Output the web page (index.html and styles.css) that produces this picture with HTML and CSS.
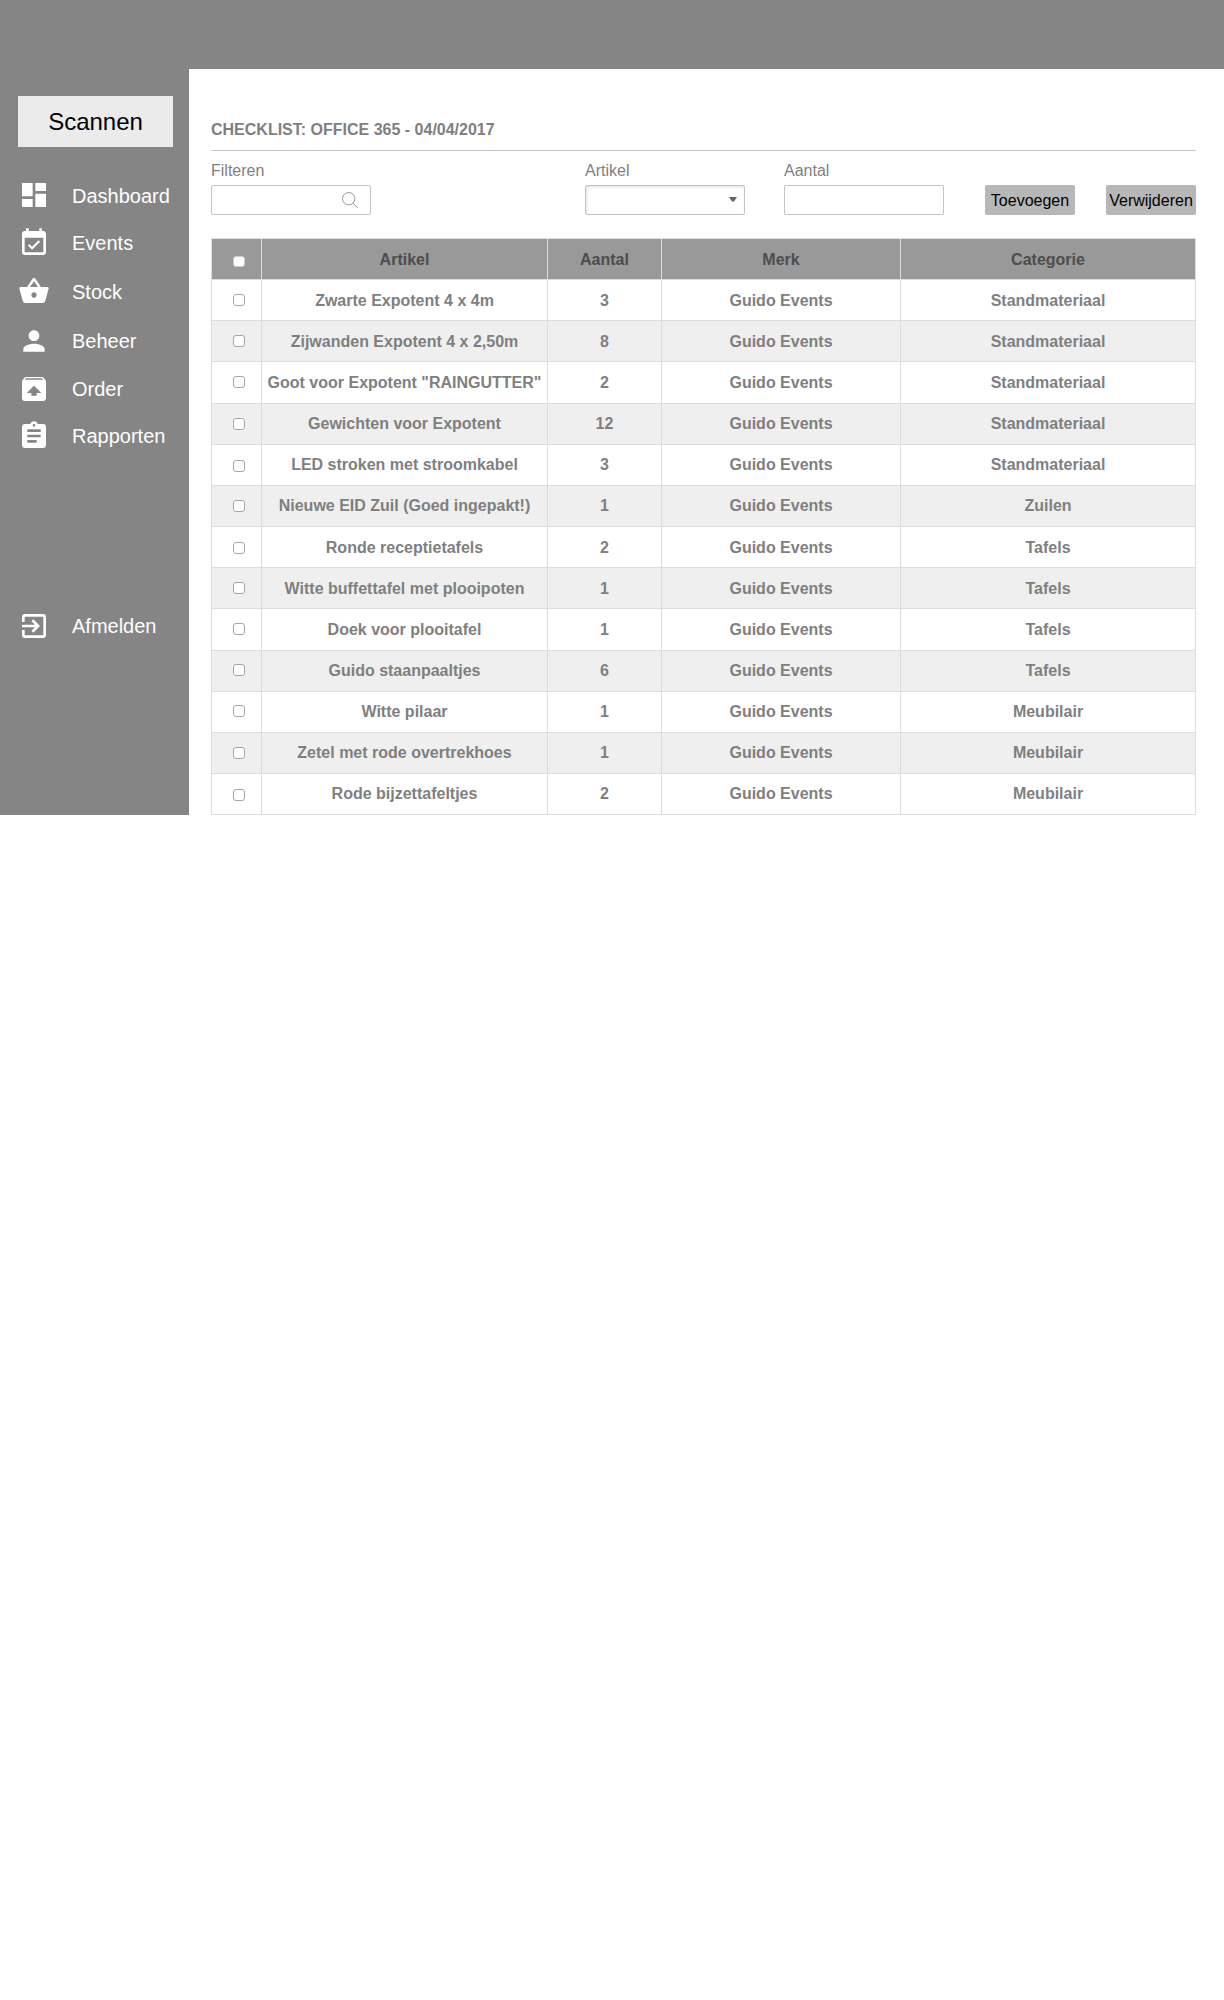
FILE: index.html
```html
<!DOCTYPE html>
<html lang="nl">
<head>
<meta charset="utf-8">
<title>Checklist</title>
<link rel="stylesheet" href="styles.css">
</head>
<body>
<header class="topbar"></header>
<div class="layout">
  <aside class="sidebar">
    <button class="scan">Scannen</button>
    <nav class="menu">
      <a class="item low"><svg viewBox="0 0 24 24"><path d="M3 13h8V3H3v10zm0 8h8v-6H3v6zm10 0h8V11h-8v10zm0-18v6h8V3h-8z"/></svg><span>Dashboard</span></a>
      <a class="item"><svg viewBox="0 0 24 24"><path d="M16.53 11.06L15.47 10l-4.88 4.88-2.12-2.12-1.06 1.06L10.59 17l5.94-5.94zM19 3h-1V1h-2v2H8V1H6v2H5c-1.11 0-1.99.9-1.99 2L3 19c0 1.1.89 2 2 2h14c1.1 0 2-.9 2-2V5c0-1.1-.9-2-2-2zm0 16H5V8h14v11z"/></svg><span>Events</span></a>
      <a class="item low"><svg viewBox="0 0 24 24"><path d="M17.21 9l-4.38-6.56c-.19-.28-.51-.42-.83-.42-.32 0-.64.14-.83.43L6.79 9H2c-.55 0-1 .45-1 1 0 .09.01.18.04.27l2.54 9.27c.23.84 1 1.46 1.92 1.46h13c.92 0 1.69-.62 1.93-1.46l2.54-9.27L23 10c0-.55-.45-1-1-1h-4.79zM9 9l3-4.4L15 9H9zm3 8c-1.1 0-2-.9-2-2s.9-2 2-2 2 .9 2 2-.9 2-2 2z"/></svg><span>Stock</span></a>
      <a class="item beheer"><svg viewBox="0 0 24 24"><path d="M12 12c2.21 0 4-1.79 4-4s-1.79-4-4-4-4 1.79-4 4 1.79 4 4 4zm0 2c-2.67 0-8 1.34-8 4v2h16v-2c0-2.66-5.33-4-8-4z"/></svg><span>Beheer</span></a>
      <a class="item"><svg viewBox="0 0 24 24"><path d="M20.55 5.22l-1.39-1.68C18.88 3.21 18.47 3 18 3H6c-.47 0-.88.21-1.15.55L3.46 5.22C3.17 5.57 3 6.01 3 6.5V19c0 1.1.89 2 2 2h14c1.1 0 2-.9 2-2V6.5c0-.49-.17-.93-.45-1.28zM12 9.5l5.5 5.5H14v2h-4v-2H6.5L12 9.5zM5.12 5l.82-1h12l.93 1H5.12z"/></svg><span>Order</span></a>
      <a class="item rapporten"><svg viewBox="0 0 24 24"><path d="M19 3h-4.18C14.4 1.84 13.3 1 12 1c-1.3 0-2.4.84-2.82 2H5c-1.1 0-2 .9-2 2v14c0 1.1.9 2 2 2h14c1.1 0 2-.9 2-2V5c0-1.1-.9-2-2-2zm-7 0c.55 0 1 .45 1 1s-.45 1-1 1-1-.45-1-1 .45-1 1-1zm2 14H7v-2h7v2zm3-4H7v-2h10v2zm0-4H7V7h10v2z"/></svg><span>Rapporten</span></a>
      <a class="item logout"><svg viewBox="0 0 24 24"><path d="M10.09 15.59L11.5 17l5-5-5-5-1.41 1.41L12.67 11H3v2h9.67l-2.58 2.59zM19 3H5c-1.11 0-2 .9-2 2v4h2V5h14v14H5v-4H3v4c0 1.1.89 2 2 2h14c1.1 0 2-.9 2-2V5c0-1.1-.9-2-2-2z"/></svg><span>Afmelden</span></a>
    </nav>
  </aside>
  <main class="content">
    <h1 class="title">CHECKLIST: OFFICE 365 - 04/04/2017</h1>
    <div class="tools">
      <div class="field filter"><span class="label">Filteren</span><div class="box"><svg class="search" viewBox="0 0 18 18"><circle cx="7.7" cy="7.7" r="6.2"/><path d="M12.4 12.4L16.6 16.8"/></svg></div></div>
      <div class="field artikel"><span class="label">Artikel</span><div class="box select"><svg class="arrow" viewBox="0 0 8 5"><path d="M0 0h8L5 4.6H3z"/></svg></div></div>
      <div class="field aantal"><span class="label">Aantal</span><div class="box"></div></div>
      <button class="btn add">Toevoegen</button>
      <button class="btn">Verwijderen</button>
    </div>
    <table class="list">
      <colgroup><col class="c-check"><col class="c-artikel"><col class="c-aantal"><col class="c-merk"><col></colgroup>
      <thead><tr><th><i class="check"></i></th><th>Artikel</th><th>Aantal</th><th>Merk</th><th>Categorie</th></tr></thead>
      <tbody>
        <tr><td><i class="check"></i></td><td>Zwarte Expotent 4 x 4m</td><td>3</td><td>Guido Events</td><td>Standmateriaal</td></tr>
        <tr><td><i class="check"></i></td><td>Zijwanden Expotent 4 x 2,50m</td><td>8</td><td>Guido Events</td><td>Standmateriaal</td></tr>
        <tr class="tall"><td><i class="check"></i></td><td>Goot voor Expotent "RAINGUTTER"</td><td>2</td><td>Guido Events</td><td>Standmateriaal</td></tr>
        <tr class="up"><td><i class="check"></i></td><td>Gewichten voor Expotent</td><td>12</td><td>Guido Events</td><td>Standmateriaal</td></tr>
        <tr class="up"><td><i class="check drop"></i></td><td>LED stroken met stroomkabel</td><td>3</td><td>Guido Events</td><td>Standmateriaal</td></tr>
        <tr class="up"><td><i class="check"></i></td><td>Nieuwe EID Zuil (Goed ingepakt!)</td><td>1</td><td>Guido Events</td><td>Zuilen</td></tr>
        <tr><td><i class="check drop"></i></td><td>Ronde receptietafels</td><td>2</td><td>Guido Events</td><td>Tafels</td></tr>
        <tr><td><i class="check"></i></td><td>Witte buffettafel met plooipoten</td><td>1</td><td>Guido Events</td><td>Tafels</td></tr>
        <tr class="tall"><td><i class="check"></i></td><td>Doek voor plooitafel</td><td>1</td><td>Guido Events</td><td>Tafels</td></tr>
        <tr class="up"><td><i class="check lift"></i></td><td>Guido staanpaaltjes</td><td>6</td><td>Guido Events</td><td>Tafels</td></tr>
        <tr class="up"><td><i class="check lift"></i></td><td>Witte pilaar</td><td>1</td><td>Guido Events</td><td>Meubilair</td></tr>
        <tr class="up"><td><i class="check"></i></td><td>Zetel met rode overtrekhoes</td><td>1</td><td>Guido Events</td><td>Meubilair</td></tr>
        <tr class="up"><td><i class="check drop"></i></td><td>Rode bijzettafeltjes</td><td>2</td><td>Guido Events</td><td>Meubilair</td></tr>
      </tbody>
    </table>
  </main>
</div>
</body>
</html>
```
FILE: styles.css
```css
* { box-sizing: border-box; }
body {
  margin: 0;
  background: #fff;
  color: #7f7f7f;
  font: 16px/18px "Liberation Sans", Arial, sans-serif;
}
button { border: 0; padding: 0; font: inherit; color: #000; }
.topbar { height: 69px; background: #858585; }
.layout { display: flex; height: 746px; }

.sidebar { width: 189px; background: #858585; padding: 27px 16px 0 18px; }
.scan { display: block; width: 155px; height: 51px; background: #ebebeb; font-size: 24px; line-height: 51px; }
.menu { display: flex; flex-direction: column; gap: 16px; margin-top: 32px; }
.item { display: flex; gap: 22px; height: 32px; color: #fff; font-size: 20px; line-height: 32px; }
.item svg { flex: none; width: 32px; height: 32px; fill: #fff; }
.item.low span { padding-top: 1px; }
.item.beheer { margin-top: 2px; }
.item.rapporten { margin-top: -1px; }
.item.logout { margin-top: 142px; }

.content { width: 985px; margin-left: 22px; padding-top: 51px; }
.title { margin: 0; height: 31px; border-bottom: 1px solid #c4c4c4; font-size: 16px; font-weight: bold; line-height: 20px; }
.tools { display: flex; align-items: flex-end; height: 64px; }
.field { display: flex; flex-direction: column; width: 160px; }
.label { height: 23px; }
.box { display: flex; height: 30px; border: 1px solid #c4c4c4; border-radius: 2px; background: #fff; }
.select { box-shadow: inset 1px 1px 3px rgba(0, 0, 0, .12); }
.search { width: 18px; height: 18px; margin: 5px 0 0 129px; fill: none; stroke: #999; stroke-width: 1; }
.arrow { width: 8px; height: 5px; margin: 11px 0 0 143px; fill: #666; }
.artikel { margin-left: 214px; }
.aantal { margin-left: 39px; }
.btn { width: 90px; height: 30px; padding-top: 1px; border-radius: 2px; background: #b7b7b7; line-height: 29px; }
.add { margin: 0 31px 0 41px; }

.list {
  width: 985px;
  margin-top: 23px;
  table-layout: fixed;
  border-collapse: separate;
  border-spacing: 0;
  border: solid #ddd;
  border-width: 1px 0 0 1px;
  font-weight: bold;
  text-align: center;
}
.c-check { width: 50px; }
.c-artikel { width: 286px; }
.c-aantal { width: 114px; }
.c-merk { width: 239px; }
.list th, .list td {
  height: 41px;
  padding: 12px 0 0;
  vertical-align: top;
  white-space: nowrap;
  border: solid #ddd;
  border-width: 0 1px 1px 0;
}
.list th { background: #999; color: #4d4d4d; }
.list tr.tall td { height: 42px; }
.list tr.up td { padding-top: 11px; }
.list tbody tr:nth-child(even) { background: #efefef; }
.list th:first-child, .list tr td:first-child { padding: 14px 0 0 21px; }
.list tr.up td:first-child { padding-top: 14px; }
.check { display: block; width: 12px; height: 12px; border: 1px solid #a6a6a6; border-radius: 3px; background: #fff; }
.check.drop { margin-top: 1px; }
.check.lift { margin-top: -1px; }
th .check { width: 12px; height: 11px; margin-top: 3px; border-color: #ccc; }
```
